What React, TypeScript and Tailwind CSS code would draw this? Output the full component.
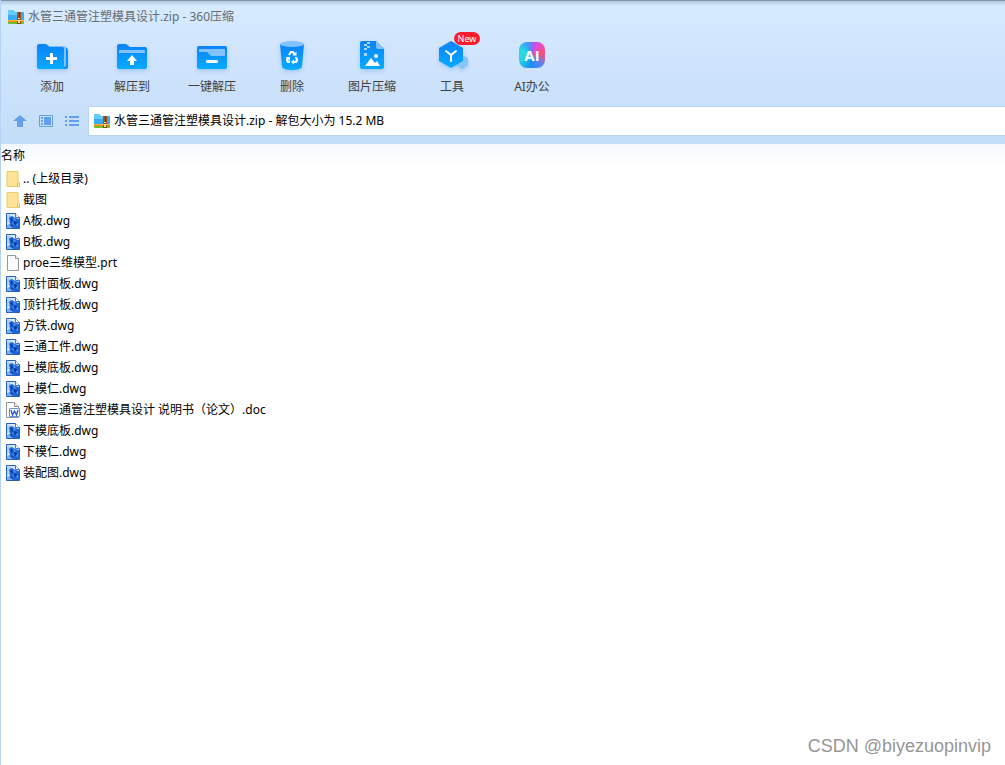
import { useState } from 'react'
import type { ReactNode } from 'react'

type FileKind = 'folder' | 'dwg' | 'blank' | 'doc'

const files: { name: string; kind: FileKind }[] = [
  { name: '.. (上级目录)', kind: 'folder' },
  { name: '截图', kind: 'folder' },
  { name: 'A板.dwg', kind: 'dwg' },
  { name: 'B板.dwg', kind: 'dwg' },
  { name: 'proe三维模型.prt', kind: 'blank' },
  { name: '顶针面板.dwg', kind: 'dwg' },
  { name: '顶针托板.dwg', kind: 'dwg' },
  { name: '方铁.dwg', kind: 'dwg' },
  { name: '三通工件.dwg', kind: 'dwg' },
  { name: '上模底板.dwg', kind: 'dwg' },
  { name: '上模仁.dwg', kind: 'dwg' },
  { name: '水管三通管注塑模具设计 说明书（论文）.doc', kind: 'doc' },
  { name: '下模底板.dwg', kind: 'dwg' },
  { name: '下模仁.dwg', kind: 'dwg' },
  { name: '装配图.dwg', kind: 'dwg' },
]

function ZipIcon() {
  return (
    <svg width="16" height="14" viewBox="0 0 16 14" className="shrink-0" aria-hidden="true">
      <path d="M0 1q0-1 1-1h4l2 2h8q1 0 1 1v8H0z" fill="#3aaaf2" />
      <path d="M0 1q0-1 1-1h4l2 2h2v3H0z" fill="#62cdfb" />
      <path d="M0 10h16v1H0z" fill="#fbb52b" />
      <path d="M0 11h16v1H0z" fill="#f28522" />
      <path d="M0 12h16v1q0 1-1 1H1q-1 0-1-1z" fill="#6fbe30" />
      <path d="M9 2h4v8H9z" fill="#a4561c" />
      <path d="M11 2h1v8h-1z" fill="#6f330c" />
      <path d="M9 9h4v5H9z" fill="#8d4a16" />
      <path d="M10 8h2v1h-2zM10 10h2v3h-2z" fill="#ffe08a" />
      <path d="M9 10h1v1H9zM12 10h1v1h-1z" fill="#ffe08a" />
    </svg>
  )
}

function FileIcon({ kind }: { kind: FileKind }) {
  if (kind === 'folder') {
    return (
      <svg width="14" height="16" viewBox="0 0 14 16" aria-hidden="true">
        <path d="M1 .5h11v10l1 1v4H1z" fill="#fde394" stroke="#ebca68" />
        <path d="M11.500 15.500v-4l1-1 1 1v4z" fill="#fff0b8" stroke="#e3bd52" />
      </svg>
    )
  }
  if (kind === 'blank') {
    return (
      <svg width="14" height="16" viewBox="0 0 14 16" aria-hidden="true">
        <path d="M1.500.5h8l3 3v12h-11z" fill="#fbfbfb" stroke="#979797" />
        <path d="M9.500.5v3h3" fill="#fff" stroke="#979797" />
      </svg>
    )
  }
  if (kind === 'doc') {
    return (
      <svg width="14" height="16" viewBox="0 0 14 16" aria-hidden="true">
        <path d="M.5.5h8l4 4v11H.5z" fill="#fff" stroke="#8d93a0" />
        <path d="M8.500.5v4h4" fill="#eef1f6" stroke="#8d93a0" />
        <path d="M3.500 6.500h10v8h-10z" fill="#fff" stroke="#6d8fec" />
        <path d="M5 8l1.500 5L8.500 9l2 4L12 8" fill="none" stroke="#2f5be0" strokeWidth="1.400" />
      </svg>
    )
  }
  return (
    <svg width="14" height="16" viewBox="0 0 14 16" aria-hidden="true">
      <path d="M.5.5h9l4 4v11H.5z" fill="#d6e9ff" stroke="#2560b5" />
      <path d="M9.500.5v4h4" fill="#fff" stroke="#3f78c4" />
      <path d="M3 4l3-1 3 2 4 1v9H6l-3-2 1-3-2-3z" fill="#1e66d6" />
      <path d="M1 2h4L3 5l1 3-3 2z" fill="#a9d1fb" />
      <path d="M1 12l2-1 1 2 3 2H1z" fill="#79b3f5" />
      <path d="M4 6l2-1 1 2-1 2zM8 8l3 1-1 3-2-1zM5 11l2 1-1 2z" fill="#0a3ba3" />
      <path d="M7 5l3 2-2 1zM6 9l2 2-1 1zM10 12l2-2v3z" fill="#58a4f6" />
    </svg>
  )
}

// shared top-to-bottom blue of the toolbar icons
function Blue({ id }: { id: string }) {
  return (
    <defs>
      <linearGradient id={id} x1="0" y1="0" x2="0" y2="1">
        <stop offset="0" stopColor="#0a82fc" />
        <stop offset="1" stopColor="#06abff" />
      </linearGradient>
    </defs>
  )
}

const tools: { label: string; badge?: string; icon: ReactNode }[] = [
  {
    label: '添加',
    icon: (
      <svg width="32" height="32" viewBox="0 0 32 32">
        <Blue id="add" />
        <path d="M29 5q3 1 3 4v16q0 2-2 2h-3V5z" fill="#0c8df8" />
        <path d="M14 4h13q3 0 3 3v16q0 2-2 2h-4z" fill="#82c3ff" />
        <path d="M1 4q0-2 2-2h7l4 3h12q2 0 2 2v18q0 2-2 2H3q-2 0-2-2z" fill="url(#add)" />
        <path d="M14 11h3v4h4v3h-4v4h-3v-4h-4v-3h4z" fill="#fff" />
      </svg>
    ),
  },
  {
    label: '解压到',
    icon: (
      <svg width="32" height="32" viewBox="0 0 32 32">
        <Blue id="extract" />
        <path d="M1 4q0-2 2-2h7l4 3h15q2 0 2 2v18q0 2-2 2H3q-2 0-2-2z" fill="url(#extract)" />
        <path d="M3 11V9q0-1 1-1h24q1 0 1 1v2z" fill="#82c3ff" />
        <path d="M16 13l5 6h-3v4h-4v-4h-3z" fill="#fff" />
      </svg>
    ),
  },
  {
    label: '一键解压',
    icon: (
      <svg width="32" height="32" viewBox="0 0 32 32">
        <Blue id="quick" />
        <rect x="1" y="4" width="30" height="23" rx="2" fill="url(#quick)" />
        <path d="M3 10V8q0-1 1-1h24q1 0 1 1v6H16q-2 0-3-2-1-2-3-2z" fill="#82c3ff" />
        <rect x="10" y="18" width="12" height="3" rx="1" fill="#fff" />
      </svg>
    ),
  },
  {
    label: '删除',
    icon: (
      <svg width="32" height="32" viewBox="0 2 32 32">
        <Blue id="remove" />
        <path d="M4 4h24l-2 22q0 4-10 4T6 26z" fill="url(#remove)" />
        <ellipse cx="16" cy="4" rx="12" ry="3" fill="#82c3ff" />
        <g fill="none" stroke="#fff" strokeWidth="2.200">
          <path d="M13 15l2-3h2l2 3" />
          <path d="M20 17l1 3-1 2h-3" />
          <path d="M14 22h-2l-1-2 1-3" />
        </g>
        <path d="M16.500 15.500h4v-4zM18 19.500v5l-3-2.500zM9.500 17h4.500v4z" fill="#fff" />
      </svg>
    ),
  },
  {
    label: '图片压缩',
    icon: (
      <svg width="32" height="32" viewBox="0 0 32 32">
        <Blue id="image" />
        <path d="M4 1q0-2 2-2h14l8 8v18q0 2-2 2H6q-2 0-2-2z" fill="url(#image)" />
        <path d="M20-1l8 8h-6q-2 0-2-2z" fill="#82c3ff" />
        <path d="M11 0h3v2h-3zM8 2h3v2H8zM11 4h3v2h-3zM8 6h3v2H8zM8 11h3v3H8z" fill="#a9d6ff" />
        <circle cx="20" cy="14" r="2" fill="#fff" />
        <path d="M9 24l6-8 4 5 2-2 3 5z" fill="#fff" />
      </svg>
    ),
  },
  {
    label: '工具',
    badge: 'New',
    icon: (
      <svg width="32" height="32" viewBox="0 1 32 32">
        <Blue id="tools" />
        <path d="M26 14l6 3v7l-6 4-6-4v-7z" fill="#84c4ff" />
        <path d="M15 0l12 7v13l-12 7-12-7V7z" fill="url(#tools)" />
        <path d="M10 10l5 4 5-4M15 14v6" fill="none" stroke="#fff" strokeWidth="2" strokeLinecap="round" strokeLinejoin="round" />
      </svg>
    ),
  },
  {
    label: 'AI办公',
    icon: (
      <span className="flex size-[26px] items-center justify-center self-start rounded-lg bg-[conic-gradient(from_20deg,#e04ae8,#f84f79_17%,#4e87f7_34%,#1a8ff4_46%,#25d3e6_62%,#25dce2_76%,#3b9df4_88%,#c548ee)] font-['Open_Sans',sans-serif] text-[15px] leading-none font-bold text-white">
        AI
      </span>
    ),
  },
]

function ToolButton({ label, badge, icon }: { label: string; badge?: string; icon: ReactNode }) {
  return (
    <button className="relative flex w-20 cursor-pointer flex-col items-center gap-[3px] text-[#3c3f45]">
      <span className="flex h-8 items-center justify-center [&>svg]:overflow-visible [&>svg]:drop-shadow-[0_2px_2px_rgba(60,140,230,0.3)]">
        {icon}
      </span>
      <span className="leading-5">{label}</span>
      {badge && (
        <span className="absolute -top-[10px] left-[42px] flex h-[13px] w-[26px] items-center justify-center rounded-full bg-[#fb1d2b] text-[9px] leading-none text-white">
          {badge}
        </span>
      )}
    </button>
  )
}

export default function App() {
  const [path, setPath] = useState('水管三通管注塑模具设计.zip - 解包大小为 15.2 MB')

  return (
    <div className="relative flex min-h-screen flex-col border-l border-[#b4d3f5] bg-white font-['Noto_Sans','Noto_Sans_CJK_SC',sans-serif] text-xs text-black">
      <header className="bg-linear-to-b from-[#d7ecff] via-[#cee3fc] to-[#c3def8]">
        {/* shadow along the top edge of the window */}
        <div className="h-[6px] border-t border-[#8195a9] bg-linear-to-b from-[#b0c7dc] to-transparent" />

        <div className="flex h-[22px] items-center gap-1 pl-[7px] text-[#666b73]">
          <ZipIcon />
          <h1>水管三通管注塑模具设计.zip - 360压缩</h1>
        </div>

        <div className="flex h-[78px] pt-[14px] pl-[11px]">
          {tools.map((tool) => (
            <ToolButton key={tool.label} {...tool} />
          ))}
        </div>

        <div className="flex h-[30px] items-center">
          <div className="flex w-[87px] shrink-0 items-center gap-3 pl-3 text-[#639fea]">
            <button aria-label="上一级" className="cursor-pointer">
              <svg width="14" height="14" viewBox="0 0 14 14" fill="currentColor">
                <path d="M7 1l7 6h-4v6H4V7H0z" />
              </svg>
            </button>
            <button aria-label="预览" className="cursor-pointer">
              <svg width="14" height="14" viewBox="0 0 14 14">
                <path d="M.5 1.500h13v11H.5z" fill="none" stroke="currentColor" />
                <path d="M2 3h2v2H2zM2 6h2v2H2zM2 9h2v2H2zM5 3h7v8H5z" fill="currentColor" />
              </svg>
            </button>
            <button aria-label="列表" className="cursor-pointer">
              <svg width="14" height="14" viewBox="0 0 14 14" fill="currentColor">
                <path d="M0 2h2v2H0zM4 2h10v2H4zM0 6h2v2H0zM4 6h10v2H4zM0 10h2v2H0zM4 10h10v2H4z" />
              </svg>
            </button>
          </div>
          <label className="flex h-[30px] flex-1 items-center gap-1 border border-r-0 border-[#b8d5f2] bg-white pl-[5px]">
            <ZipIcon />
            <input
              aria-label="路径"
              value={path}
              onChange={(e) => setPath(e.target.value)}
              className="h-5 min-w-0 flex-1 leading-5 outline-none"
            />
          </label>
        </div>
        <div className="h-2 bg-[#c3def9]" />
      </header>

      <main className="flex-1 bg-linear-to-b from-[#f4f9ff] to-white to-[24px]">
        <table className="w-full border-collapse text-left">
          <thead>
            <tr className="h-6">
              <th className="p-0 leading-5 font-normal">名称</th>
            </tr>
          </thead>
          <tbody>
            {files.map((file) => (
              <tr key={file.name} className="h-[21px] hover:bg-[#e5f3ff]">
                <td className="p-0 pl-[5px]">
                  <div className="flex h-5 items-center gap-[3px]">
                    <FileIcon kind={file.kind} />
                    <span className="leading-5">{file.name}</span>
                  </div>
                </td>
              </tr>
            ))}
          </tbody>
        </table>
      </main>

      <footer className="absolute right-[14px] bottom-[7px] font-['Liberation_Sans',sans-serif] text-lg leading-6 text-[#969696]">
        CSDN @biyezuopinvip
      </footer>
    </div>
  )
}
